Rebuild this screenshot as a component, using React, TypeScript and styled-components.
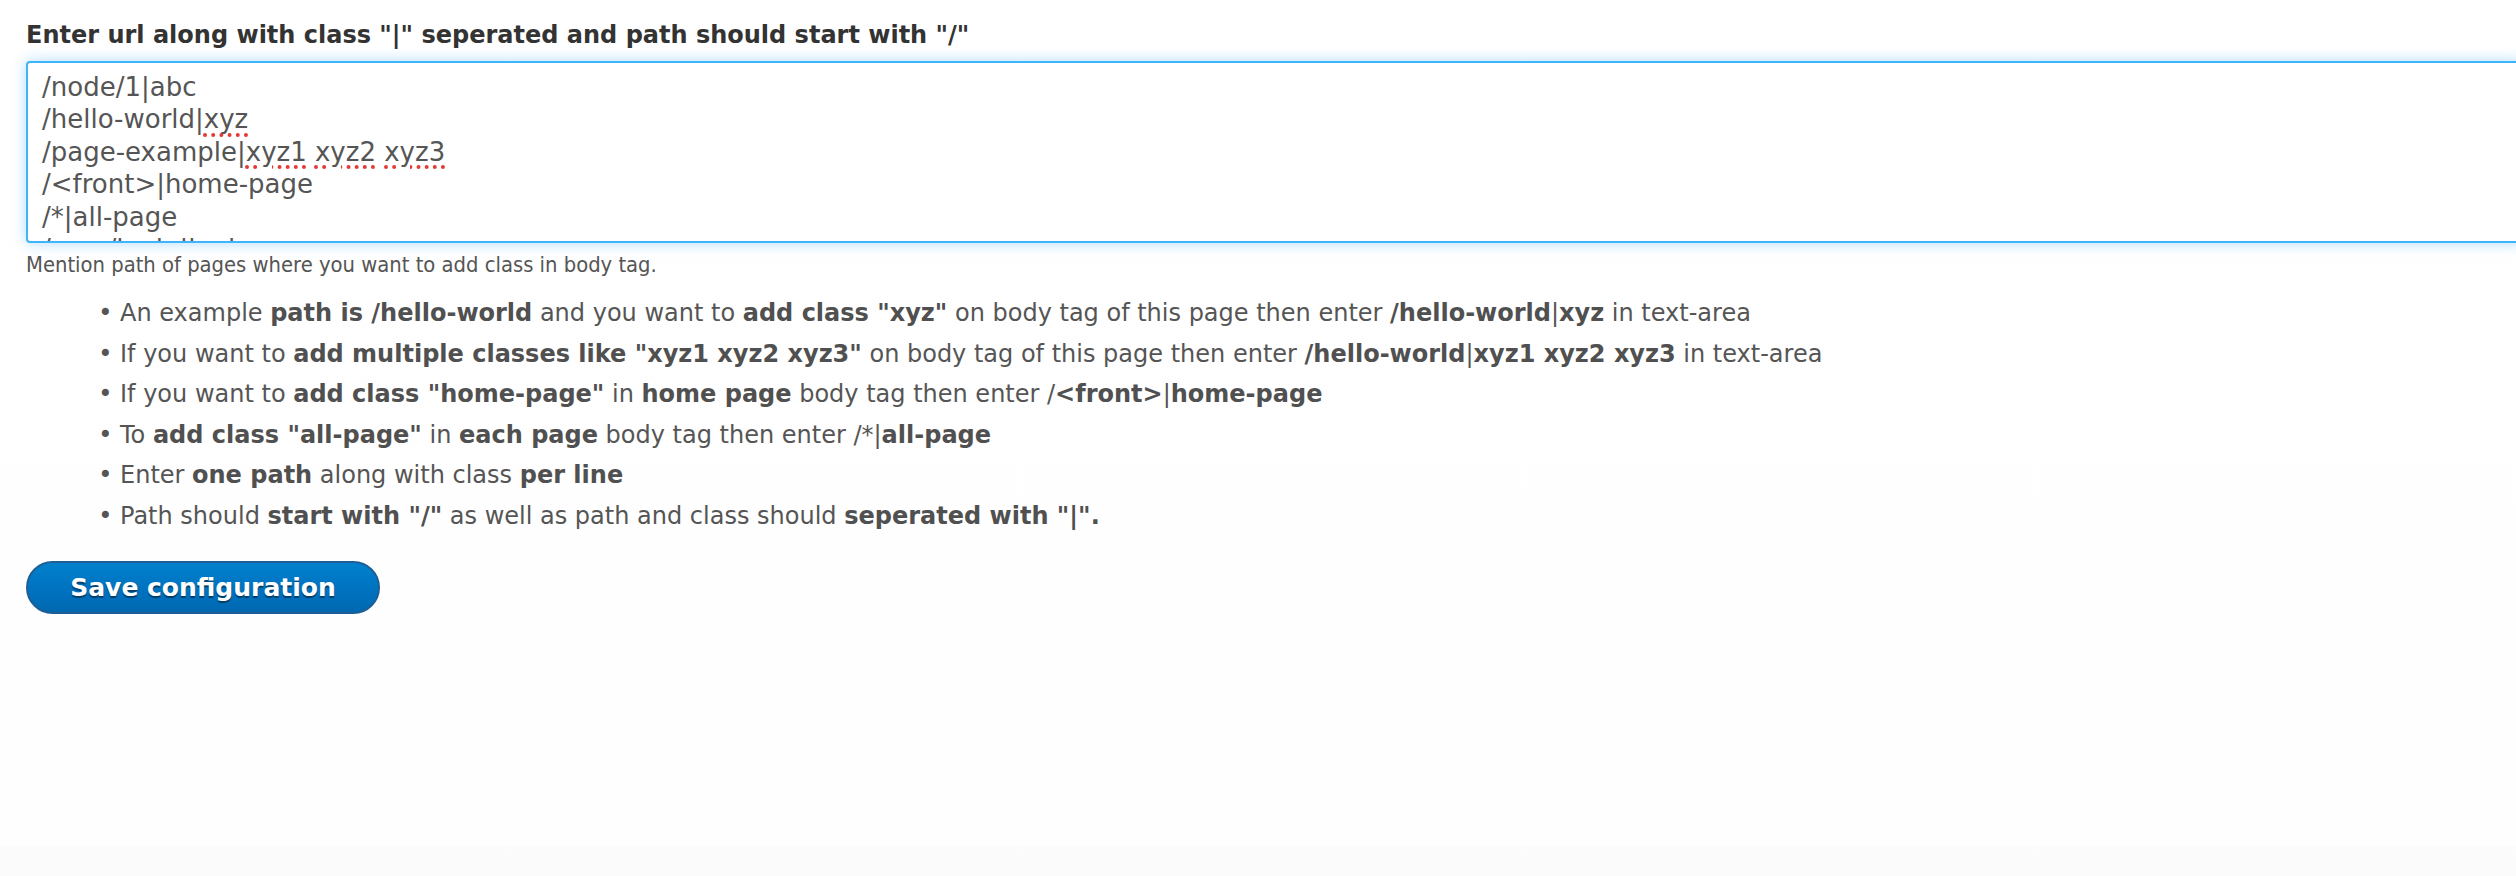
import React from "react";
import styled, { createGlobalStyle } from "styled-components";

const GlobalStyle = createGlobalStyle`
  html, body {
    margin: 0;
    padding: 0;
    background: #ffffff;
    overflow: hidden;
  }
  body {
    font-family: "DejaVu Sans", "Liberation Sans", sans-serif;
  }
`;

const Page = styled.div`
  width: 2516px;
  height: 876px;
  overflow: hidden;
  box-sizing: border-box;
  padding: 16px 0 0 26px;
  background: linear-gradient(to bottom, #ffffff 0%, #fefefe 96.5%, #fcfcfc 96.6%, #fbfbfb 100%);
`;

const Form = styled.form`
  display: flex;
  flex-direction: column;
  align-items: flex-start;
`;

const Label = styled.label`
  font-size: 24px;
  font-weight: bold;
  color: #333333;
  line-height: 38px;
  margin-bottom: 7px;
`;

const TextBox = styled.div`
  box-sizing: border-box;
  width: calc(100% + 10px);
  height: 182px;
  border: 2px solid #3fb3fb;
  border-radius: 4px;
  padding: 8px 14px 0;
  overflow: hidden;
  box-shadow: 0 0 14px rgba(80, 180, 255, 0.45);
  font-size: 26px;
  line-height: 32.4px;
  color: #555555;
  white-space: pre;
`;

const Line = styled.div``;

const Misspelled = styled.span`
  text-decoration: underline dotted #e53935;
  text-decoration-thickness: 4px;
  text-underline-offset: 5px;
`;

const Description = styled.div`
  font-family: "DejaVu Sans Condensed", "DejaVu Sans", sans-serif;
  font-stretch: condensed;
  font-size: 21.8px;
  line-height: 40px;
  color: #555555;
  margin-top: 2px;
`;

const List = styled.ul`
  margin: 8px 0 0;
  padding: 0 0 0 94px;
  font-size: 24px;
  line-height: 40.5px;
  color: #555555;
`;

const Item = styled.li`
  &::marker {
    content: "• ";
    color: #555555;
  }
  b {
    font-weight: bold;
    color: #505050;
  }
`;

const SaveButton = styled.button`
  margin-top: 25px;
  box-sizing: border-box;
  width: 354px;
  height: 53px;
  border-radius: 27px;
  border: 2px solid #1d5f95;
  background: linear-gradient(to bottom, #0080cc 0%, #0071bf 60%, #0068b0 100%);
  color: #ffffff;
  font-family: "DejaVu Sans", "Liberation Sans", sans-serif;
  font-size: 25px;
  font-weight: bold;
  text-shadow: 0 2px 1px rgba(0, 0, 0, 0.45);
  cursor: pointer;
  padding: 0;
`;

export default function App() {
  return (
    <>
      <GlobalStyle />
      <Page>
        <Form onSubmit={(e) => e.preventDefault()}>
          <Label htmlFor="body-class">
            Enter url along with class "|" seperated and path should start with "/"
          </Label>
          <TextBox id="body-class" role="textbox" aria-multiline="true">
            <Line>/node/1|abc</Line>
            <Line>
              /hello-world|<Misspelled>xyz</Misspelled>
            </Line>
            <Line>
              /page-example|<Misspelled>xyz1</Misspelled> <Misspelled>xyz2</Misspelled>{" "}
              <Misspelled>xyz3</Misspelled>
            </Line>
            <Line>/&lt;front&gt;|home-page</Line>
            <Line>/*|all-page</Line>
            <Line>/user/login|login-page</Line>
          </TextBox>
          <Description>Mention path of pages where you want to add class in body tag.</Description>
          <List>
            <Item>
              An example <b>path is /hello-world</b> and you want to <b>add class "xyz"</b> on body tag of this page then enter <b>/hello-world</b>|<b>xyz</b> in text-area
            </Item>
            <Item>
              If you want to <b>add multiple classes like "xyz1 xyz2 xyz3"</b> on body tag of this page then enter <b>/hello-world</b>|<b>xyz1 xyz2 xyz3</b> in text-area
            </Item>
            <Item>
              If you want to <b>add class "home-page"</b> in <b>home page</b> body tag then enter /<b>&lt;front&gt;</b>|<b>home-page</b>
            </Item>
            <Item>
              To <b>add class "all-page"</b> in <b>each page</b> body tag then enter /*|<b>all-page</b>
            </Item>
            <Item>
              Enter <b>one path</b> along with class <b>per line</b>
            </Item>
            <Item>
              Path should <b>start with "/"</b> as well as path and class should <b>seperated with "|".</b>
            </Item>
          </List>
          <SaveButton type="submit">Save configuration</SaveButton>
        </Form>
      </Page>
    </>
  );
}
